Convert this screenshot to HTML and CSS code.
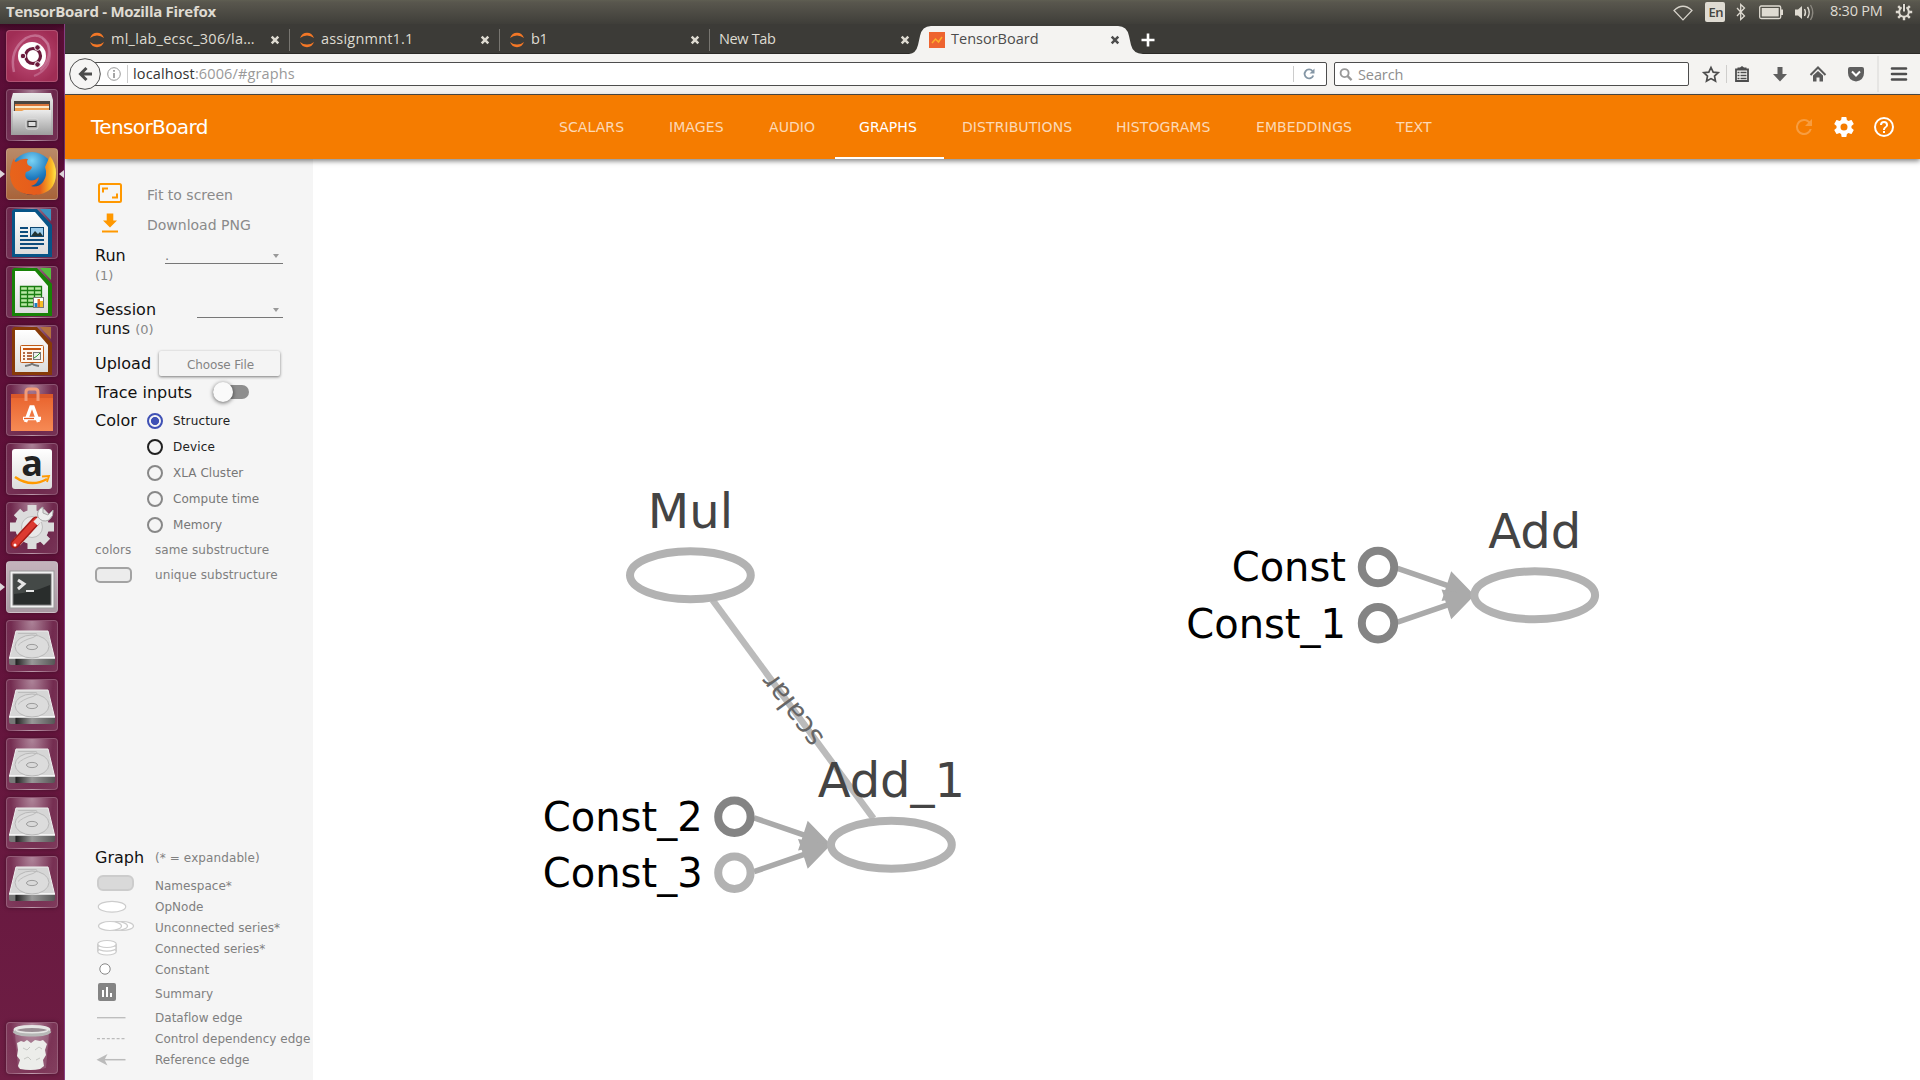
FILE: index.html
```html
<!DOCTYPE html>
<html lang="en">
<head>
<meta charset="utf-8">
<title>TensorBoard</title>
<link rel="stylesheet" href="styles.css">
</head>
<body>
<svg class="defs" width="0" height="0">
  <defs>
    <linearGradient id="silver" x1="0" y1="0" x2="0" y2="1"><stop offset="0" stop-color="#ececec"/><stop offset="1" stop-color="#9d9d9d"/></linearGradient>
    <linearGradient id="paper" x1="0" y1="0" x2="0" y2="1"><stop offset="0" stop-color="#fff"/><stop offset="1" stop-color="#dcdcdc"/></linearGradient>
    <linearGradient id="dark" x1="0" y1="0" x2="1" y2="0"><stop offset="0" stop-color="#777"/><stop offset=".13" stop-color="#777"/><stop offset=".15" stop-color="#222"/><stop offset=".5" stop-color="#999"/><stop offset="1" stop-color="#555"/></linearGradient>
    <linearGradient id="bag" x1="0" y1="0" x2="0" y2="1"><stop offset="0" stop-color="#e8622c"/><stop offset="1" stop-color="#f68a55"/></linearGradient>
    <radialGradient id="globe" cx=".5" cy=".2" r=".8"><stop offset="0" stop-color="#7ad3f5"/><stop offset=".5" stop-color="#1f7cc0"/><stop offset="1" stop-color="#10306c"/></radialGradient>
    <linearGradient id="fox" x1="0" y1="0" x2="1" y2="0"><stop offset="0" stop-color="#e8641b"/><stop offset=".65" stop-color="#e55b1c"/><stop offset=".9" stop-color="#fbb827"/><stop offset="1" stop-color="#ffe74a"/></linearGradient>
    <symbol id="drive" viewBox="0 0 52 52">
      <path d="M10 11h32l6.500 27H3.500z" fill="#d6d6d6" stroke="#efefef"/>
      <path d="M3 38h46v5q0 2-2 2H5q-2 0-2-2z" fill="url(#dark)"/>
      <path d="M3 38h46" stroke="#fafafa" stroke-width="1.400"/>
      <ellipse cx="26" cy="26.500" rx="17" ry="11.500" fill="#dcdcdc" stroke="#b8b8b8"/>
      <path d="M12 13.500h18q3 1-3 4-11 3-15 8" fill="none" stroke="#bdbdbd"/>
      <ellipse cx="26" cy="27" rx="5.500" ry="2.600" fill="#d9d9d9" stroke="#9c9c9c"/>
    </symbol>
    <symbol id="close" viewBox="0 0 10 10"><path d="M1.700 1.700l6.600 6.600M8.300 1.700l-6.600 6.600" stroke="currentColor" stroke-width="2.500"/></symbol>
    <symbol id="jupyter" viewBox="0 0 16 16"><path d="M1 6Q3 .8 8 .8T15 6Q12 3.400 8 3.400T1 6zM1 10q2 5.200 7 5.200t7-5.200q-3 2.600-7 2.600T1 10z" fill="#f37726"/></symbol>
  </defs>
</svg>

<header class="panel">
  <span class="panel-title">TensorBoard - Mozilla Firefox</span>
  <svg class="panel-icons" width="156" height="24" viewBox="1670 0 156 24">
    <path d="M1674 10.500q9-8.500 18 0l-9 9.300z" fill="none" stroke="#d8d4cb" stroke-width="1.200"/>
    <rect x="1705" y="2" width="20" height="20" rx="2" fill="#dfdbd2"/>
    <text class="lang" x="1708.500" y="17">En</text>
    <path d="M1737 8l7.500 8-3.800 3.500v-15l3.800 3.500-7.500 8" fill="none" stroke="#dfdbd2" stroke-width="1.300"/>
    <rect x="1759.700" y="6" width="21" height="12.500" rx="1.500" fill="none" stroke="#dfdbd2" stroke-width="1.300"/><rect x="1761.700" y="8" width="17" height="8.500" fill="#dfdbd2"/><rect x="1781" y="9.500" width="2" height="5.500" fill="#dfdbd2"/>
    <path d="M1795 9.500h3l4-3.500v13l-4-3.500h-3z" fill="#dfdbd2"/><path d="M1804.500 9q2 3.500 0 7M1807.500 7q3.500 5.500 0 11" fill="none" stroke="#dfdbd2" stroke-width="1.400"/><path d="M1810.500 5q4.500 7.500 0 15" fill="none" stroke="#8c8981" stroke-width="1.300"/>
  </svg>
  <span class="clock">8:30 PM</span>
  <svg class="session" width="18" height="18" viewBox="-9 -9 18 18"><circle r="4.800" fill="none" stroke="#dfdbd2" stroke-width="2"/><g stroke="#dfdbd2" stroke-width="2.400"><path d="M0 5v3.200M5 0h3.200M-5 0h-3.200M3.600 3.600l2.200 2.200M-3.600 3.600l-2.200 2.200M3.600-3.600l2.200-2.200M-3.600-3.600l-2.200-2.200"/></g><path d="M0-8v8" stroke="#45443f" stroke-width="4.500"/><path d="M0-8v7.500" stroke="#dfdbd2" stroke-width="2"/></svg>
</header>

<div class="desktop">
  <nav class="launcher">
    <div class="tile tile-dash"><svg viewBox="0 0 52 52"><path d="M8 42Q3 20 20 8q14-7 22 6 4 16-8 26" fill="none" stroke="#d390ae" stroke-width="2.500" opacity=".6"/><path d="M36 8q12 10 6 26-4 8-14 12" fill="none" stroke="#ca7b9c" stroke-width="2" opacity=".6"/><circle cx="26" cy="26" r="14" fill="#fff"/><circle cx="27" cy="26" r="7.500" fill="none" stroke="#6b1a3c" stroke-width="3.200"/><g fill="#6b1a3c" stroke="#fff" stroke-width="1"><circle cx="17" cy="26" r="2.800"/><circle cx="31.500" cy="17.500" r="2.800"/><circle cx="31.500" cy="34.500" r="2.800"/></g></svg></div>
    <div class="tile"><svg viewBox="0 0 52 52"><path d="M7 4h38l2 7v35H5V11z" fill="url(#silver)"/><path d="M8 12h36v12H8z" fill="#4a4540"/><path d="M9 15l34 0v6H9z" fill="#d9763a"/><path d="M9 17h34v2H9z" fill="#fbe9c8"/><path d="M9 19h34v3H9z" fill="#eea052"/><path d="M7 22h9l2-1h27v25H7z" fill="url(#silver)"/><rect x="20" y="30" width="12" height="10" rx="2" fill="#aaa" stroke="#dcdcdc"/><rect x="22" y="32.500" width="8" height="5" fill="#ddd" stroke="#333"/></svg></div>
    <div class="tile tile-firefox tile-running tile-focused"><svg viewBox="0 0 52 52"><circle cx="26" cy="25.500" r="21.500" fill="url(#globe)"/><path d="M8 10q0 3 2 4 6-4 12-3-2 3 0 6l4 2q-1 4-6 5-2 4 1 7 6 4 12-2-1 7-8 9 7 2 12-4 5-7 2-15l5-11q6 8 6 17 0 21-22 22Q5 46 4 27 4 18 8 10z" fill="url(#fox)"/></svg></div>
    <div class="tile"><svg viewBox="0 0 52 52"><path d="M8 2h23l15 16v32H6V4z" fill="#075487"/><path d="M34 2h11v12z" fill="#3b92bf"/><path d="M9 5h20l13 15v27H9z" fill="url(#paper)"/><path d="M14 21h8M14 25h8M14 29h8M14 33h24M14 37h24M14 41h18" stroke="#0d4c7c" stroke-width="2"/><rect x="24.500" y="20.500" width="13" height="9" fill="#9bcbea" stroke="#0e4670"/><path d="M25 29l4-5 3 3 2-2 3 4z" fill="#233"/></svg></div>
    <div class="tile"><svg viewBox="0 0 52 52"><path d="M8 2h23l15 16v32H6V4z" fill="#188207"/><path d="M34 2h11v12z" fill="#55bd3f"/><path d="M9 5h20l13 15v27H9z" fill="url(#paper)"/><path d="M14.500 20.500h21v20h-21z" fill="#b8e8a3"/><path d="M14.500 20.500h21v20h-21zM14 24.500h21M14 28.500h21M14 32.500h21M14 36.500h21M21.500 20v20M28.500 20v20" fill="none" stroke="#1b7d12" stroke-width="1.300"/><rect x="27.500" y="31.500" width="10" height="10" fill="#fff" stroke="#777"/><path d="M28.500 37h3v4h-3z" fill="#187fc4"/><path d="M31.500 33h2.500v8h-2.500z" fill="#e86d1e"/><path d="M34 35h3v6h-3z" fill="#f6bd28"/></svg></div>
    <div class="tile"><svg viewBox="0 0 52 52"><path d="M8 2h23l15 16v32H6V4z" fill="#873a08"/><path d="M34 2h11v12z" fill="#b4713f"/><path d="M9 5h20l13 15v27H9z" fill="url(#paper)"/><rect x="14.500" y="20.500" width="23" height="17" rx="1" fill="#fff7ee" stroke="#bf5b18"/><path d="M17 24h18" stroke="#c7540f" stroke-width="2"/><path d="M17 28h2M17 31h2M17 34h2M21 28h5M21 31h5M21 34h5" stroke="#9a3e0c" stroke-width="1.600"/><rect x="27.500" y="27.500" width="7" height="7" fill="#eee" stroke="#777"/><path d="M28 33l3-2 3-3" stroke="#2a9d2a" fill="none"/><path d="M19 41q7-1 7-3 0 2 7 3" stroke="#777" stroke-width="2" fill="none"/></svg></div>
    <div class="tile"><svg viewBox="0 0 52 52"><path d="M5 10h42v37H5z" fill="url(#bag)"/><path d="M5 10h42v4H5z" fill="#d9582a"/><path d="M20 17V8q0-3 3-3h6q3 0 3 3v9" fill="none" stroke="#f29b78" stroke-width="3"/><path d="M19.500 38l5.500-15h2l5.500 15" fill="none" stroke="#fff" stroke-width="3.500"/><path d="M17 34.500h18" stroke="#fff" stroke-width="3.500"/><path d="M18 34.500h10" stroke="#e85f25" stroke-width="1.300"/></svg></div>
    <div class="tile"><svg viewBox="0 0 52 52"><rect x="6" y="6" width="40" height="40" rx="3" fill="url(#paper)"/><text class="amazon" x="26" y="32.500" text-anchor="middle">a</text><path d="M9 34q16 11 32 2" fill="none" stroke="#ff9900" stroke-width="2.500"/><path d="M36 33.500l7-.5-2 6" fill="none" stroke="#ff9900" stroke-width="1.800"/></svg></div>
    <div class="tile"><svg viewBox="0 0 52 52"><g transform="translate(26 25)"><path d="M0-22v44M-22 0h44M-15-15l30 30M-15 15l30-30" stroke="#dcdcdc" stroke-width="9"/><circle r="17" fill="#dcdcdc"/><circle r="10.500" fill="#e8e8e8" stroke="#bdbdbd"/></g><path d="M9 42L30 19" stroke="#a51b17" stroke-width="9" stroke-linecap="round"/><path d="M9 42L30 19" stroke="#dc3a31" stroke-width="6" stroke-linecap="round"/><path d="M29.500 21.500l8-8" stroke="#e9e9e9" stroke-width="6"/><path d="M37 5q-7 3-5 10 4 6 11 3 5-4 4-10l-5 5-5-2z" fill="#eee" stroke="#a9a9a9"/><circle cx="9" cy="43" r="1.500" fill="#fff"/></svg></div>
    <div class="tile tile-terminal tile-running"><svg viewBox="0 0 52 52"><rect x="4" y="10" width="44" height="37" fill="#f1f1f1" stroke="#999"/><rect x="7" y="13" width="38" height="31" fill="#292d2c" stroke="#777"/><path d="M8 14h36v10Q25 32 8 33z" fill="#444947"/><path d="M12 19l6 4-6 5" fill="none" stroke="#e6e6e6" stroke-width="3"/><path d="M20 30h8" stroke="#e6e6e6" stroke-width="2"/></svg></div>
    <div class="tile"><svg><use href="#drive"/></svg></div>
    <div class="tile"><svg><use href="#drive"/></svg></div>
    <div class="tile"><svg><use href="#drive"/></svg></div>
    <div class="tile"><svg><use href="#drive"/></svg></div>
    <div class="tile"><svg><use href="#drive"/></svg></div>
    <div class="tile tile-trash"><svg viewBox="0 0 52 52"><path d="M9 12h34l-3 34q-14 4-28 0z" fill="#cdb7c2" opacity=".25"/><path d="M11 21l4-2 3 1 3-2 4 3 4-3 5 1 3-1 4 4-2 6 1 5-3 5 1 6-4 3q-9 2-20 0l-2-3 2-6-3-4 1-6z" fill="#ecedea"/><path d="M17 26l4 2 3-3M29 28l4-3 3 2M18 37l4-2 3 3M30 38l4-2" stroke="#c6c8c4" fill="none"/><ellipse cx="26" cy="8" rx="17" ry="3.500" fill="#998d93" stroke="#e6e6e4" stroke-width="3"/><path d="M8 9q2 4 18 4t18-4" fill="none" stroke="#b7b9b7" stroke-width="3"/></svg></div>
  </nav>

  <main class="browser">
    <div class="tabstrip">
      <div class="tab"><svg class="favicon"><use href="#jupyter"/></svg><span class="tab-label tab-label-path">ml_lab_ecsc_306/la…</span><svg class="tab-close"><use href="#close"/></svg></div>
      <div class="tab"><svg class="favicon"><use href="#jupyter"/></svg><span class="tab-label tab-label-wide">assignmnt1.1</span><svg class="tab-close"><use href="#close"/></svg></div>
      <div class="tab"><svg class="favicon"><use href="#jupyter"/></svg><span class="tab-label">b1</span><svg class="tab-close"><use href="#close"/></svg></div>
      <div class="tab tab-last"><span class="tab-label">New Tab</span><svg class="tab-close"><use href="#close"/></svg></div>
      <div class="tab tab-active">
        <svg class="tab-shape" width="234" height="28" viewBox="0 0 234 28"><path d="M0 28q7-.5 9-9l2-9Q13 0 22 0h187q9 0 11 10l2 9q2 8.500 12 9z" fill="#f4f3f1"/></svg>
        <svg class="favicon" viewBox="0 0 16 16"><path fill="#ee6430" d="M0 0h16v16H0z"/><path d="M3 11l3.500-4 3 3L13 5" fill="none" stroke="#fdb02c" stroke-width="1.500"/></svg><span class="tab-label tab-label-current">TensorBoard</span><svg class="tab-close"><use href="#close"/></svg>
      </div>
      <svg class="new-tab" viewBox="0 0 14 14"><path d="M7 .5v13M.5 7h13" stroke="#fff" stroke-width="2.600"/></svg>
    </div>

    <div class="toolbar">
      <div class="urlbar">
        <svg class="back" viewBox="0 0 32 32"><circle cx="16" cy="16" r="15.300" fill="#f6f5f4" stroke="#4d4d4d"/><path d="M23 16H12M17.500 10l-6 6 6 6" fill="none" stroke="#4c4c4c" stroke-width="3"/></svg>
        <svg class="info" viewBox="0 0 14 14"><circle cx="7" cy="7" r="6.300" fill="none" stroke="#999"/><path d="M7 6v5M7 3v1.800" stroke="#888" stroke-width="1.500"/></svg>
        <span class="url"><b>localhost</b>:6006/#graphs</span>
        <svg class="reload" viewBox="0 0 12 12"><path d="M9.500 3A4.500 4.500 0 1 0 10.300 7.500" fill="none" stroke="#8496a5" stroke-width="1.800"/><path d="M11.500 .5v5H6.500z" fill="#8496a5"/></svg>
      </div>
      <div class="search"><svg viewBox="0 0 15 15"><circle cx="6" cy="6" r="4.300" fill="none" stroke="#999" stroke-width="2"/><path d="M9 9l4.500 4.500" stroke="#999" stroke-width="2.400"/></svg><span>Search</span></div>
      <svg class="tools" width="220" height="40" viewBox="1696 54 220 40">
        <path d="M1711 67.500l2.200 4.600 5 .6-3.700 3.400 1 5-4.500-2.500-4.500 2.500 1-5-3.700-3.400 5-.6z" fill="none" stroke="#4d4d4d" stroke-width="1.700"/>
        <path d="M1726.500 65v18" stroke="#cfcecc"/><path d="M1878 56v36" stroke="#d8d7d5"/>
        <path d="M1736 69.500h12v11.500h-12z" fill="none" stroke="#4d4d4d" stroke-width="1.800"/><path d="M1737.500 69v-1.500h2.500l2-1.500 2 1.500h2.500V69z" fill="#4d4d4d"/><path d="M1737.500 72.500h2M1740.500 72.500h6M1737.500 75.500h2M1740.500 75.500h6M1737.500 78.500h2M1740.500 78.500h6" stroke="#4d4d4d" stroke-width="1.500"/>
        <path d="M1777.500 67h5v7h4.500l-7 7.500-7-7.500h4.500z" fill="#5f5f5f"/>
        <path d="M1810.500 75l7.500-7.500 7.500 7.500" fill="none" stroke="#5a5a5a" stroke-width="2"/><path d="M1813 75.500l5-4.500 5 4.500v6h-3.500v-4h-3v4h-3.500z" fill="#5a5a5a"/>
        <path d="M1850 67h12q2 0 2 2v4q0 7-8 8.500-8-1.500-8-8.500v-4q0-2 2-2z" fill="#5f5f5f"/><path d="M1852 71.500l4 4 4-4" fill="none" stroke="#fff" stroke-width="2"/>
        <path d="M1892 68.500h14M1892 74h14M1892 79.500h14" stroke="#4d4d4d" stroke-width="2.600" stroke-linecap="round"/>
      </svg>
    </div>

    <div class="appbar">
      <h1>TensorBoard</h1>
      <ul class="plugins">
        <li class="w110">SCALARS</li><li class="w100">IMAGES</li><li class="w90">AUDIO</li><li class="w103 selected">GRAPHS</li><li class="w154">DISTRIBUTIONS</li><li class="w140">HISTOGRAMS</li><li class="w140">EMBEDDINGS</li><li>TEXT</li>
      </ul>
      <div class="actions">
        <svg class="dim" viewBox="0 0 24 24"><path d="M17.650 6.350A7.960 7.960 0 0 0 12 4a8 8 0 1 0 7.730 10h-2.080A6 6 0 1 1 12 6c1.660 0 3.140.69 4.220 1.780L13 11h7V4z"/></svg>
        <svg viewBox="0 0 24 24"><path d="M19.430 12.980c.04-.32.07-.64.07-.98s-.03-.66-.07-.98l2.110-1.650c.19-.15.24-.42.12-.64l-2-3.460c-.12-.22-.39-.3-.61-.22l-2.490 1c-.52-.4-1.080-.73-1.690-.98l-.38-2.650A.488.488 0 0 0 14 2h-4c-.25 0-.46.18-.49.42l-.38 2.650c-.61.25-1.170.59-1.690.98l-2.490-1c-.23-.09-.49 0-.61.22l-2 3.460c-.13.22-.07.49.12.64l2.110 1.650c-.04.32-.07.65-.07.98s.03.66.07.98l-2.110 1.650c-.19.15-.24.42-.12.64l2 3.460c.12.22.39.3.61.22l2.490-1c.52.4 1.080.73 1.690.98l.38 2.650c.03.24.24.42.49.42h4c.25 0 .46-.18.49-.42l.38-2.650c.61-.25 1.170-.59 1.690-.98l2.490 1c.23.09.49 0 .61-.22l2-3.460c.12-.22.07-.49-.12-.64zM12 15.500a3.500 3.500 0 1 1 0-7 3.500 3.500 0 0 1 0 7z"/></svg>
        <svg viewBox="0 0 24 24"><path d="M11 18h2v-2h-2zm1-16a10 10 0 1 0 0 20 10 10 0 0 0 0-20zm0 18a8 8 0 1 1 0-16 8 8 0 0 1 0 16zm0-14a4 4 0 0 0-4 4h2a2 2 0 1 1 4 0c0 2-3 1.750-3 5h2c0-2.250 3-2.500 3-5a4 4 0 0 0-4-4z"/></svg>
      </div>
    </div>

    <div class="workspace">
      <aside class="sidebar">
        <div class="command"><svg width="24" height="20" viewBox="0 0 24 20"><rect x="1" y="1" width="22" height="18" rx="1.500" fill="none" stroke="#ff9800" stroke-width="2"/><path d="M5 9.500V5.500h5M19 10.500v4h-5" fill="none" stroke="#ff9800" stroke-width="2"/></svg><span>Fit to screen</span></div>
        <div class="command"><svg width="24" height="20" viewBox="0 0 24 20"><path d="M8.700.5h6.600v7H19l-7 7-7-7h3.700z" fill="#ff9800"/><path d="M4 18.500h16" stroke="#ff9800" stroke-width="2"/></svg><span>Download PNG</span></div>
        <div class="field field-run"><label>Run<br><small>(1)</small></label><div class="select"><span>.</span><i></i></div></div>
        <div class="field field-session"><label>Session<br>runs <small>(0)</small></label><div class="select"><span></span><i></i></div></div>
        <div class="upload"><label>Upload</label><button>Choose File</button></div>
        <div class="trace"><label>Trace inputs</label><span class="toggle"></span></div>
        <div class="color">
          <label>Color</label>
          <ul class="radios">
            <li class="enabled checked"><i></i>Structure</li>
            <li class="enabled"><i></i>Device</li>
            <li><i></i>XLA Cluster</li>
            <li><i></i>Compute time</li>
            <li><i></i>Memory</li>
          </ul>
        </div>
        <div class="key"><span>colors</span><span>same substructure</span></div>
        <div class="key"><span><i class="swatch"></i></span><span>unique substructure</span></div>

        <div class="legend">
          <div class="legend-head"><b>Graph</b><span>(* = expandable)</span></div>
          <div class="legend-row"><svg viewBox="0 0 60 21"><rect x="3" y="0" width="35" height="14" rx="5" fill="#d9d9d9" stroke="#ccc" stroke-width="2"/></svg>Namespace*</div>
          <div class="legend-row"><svg viewBox="0 0 60 21"><ellipse cx="17" cy="9.700" rx="13.700" ry="5.400" class="shape"/></svg>OpNode</div>
          <div class="legend-row"><svg viewBox="0 0 60 21"><ellipse cx="27" cy="8" rx="11.500" ry="4.500" class="shape"/><ellipse cx="21" cy="8" rx="11.500" ry="4.500" class="shape"/><ellipse cx="15" cy="8" rx="11.500" ry="4.500" class="shape"/></svg>Unconnected series*</div>
          <div class="legend-row"><svg viewBox="0 0 60 21"><ellipse cx="12" cy="12.500" rx="9.300" ry="3.500" class="shape"/><ellipse cx="12" cy="8.700" rx="9.300" ry="3.500" class="shape"/><ellipse cx="12" cy="5" rx="9.300" ry="3.500" class="shape"/><path d="M2.700 5v7.500M21.300 5v7.500" class="shape"/></svg>Connected series*</div>
          <div class="legend-row"><svg viewBox="0 0 60 21"><circle cx="10" cy="9" r="5.200" fill="#fff" stroke="#888"/></svg>Constant</div>
          <div class="legend-row legend-row-tall"><svg viewBox="0 0 60 27"><rect x="3" y="2" width="18" height="18" rx="2" fill="#848484"/><path d="M8 16V9M12 16V6M16 16v-4" stroke="#fff" stroke-width="2"/></svg>Summary</div>
          <div class="legend-row"><svg viewBox="0 0 60 21"><path d="M2 9.700h28.500" stroke="#bbb" stroke-width="1.300"/></svg>Dataflow edge</div>
          <div class="legend-row"><svg viewBox="0 0 60 21"><path d="M2 9.700h28.500" stroke="#bbb" stroke-width="1.300" stroke-dasharray="3 1.900"/></svg>Control dependency edge</div>
          <div class="legend-row"><svg viewBox="0 0 60 21"><path d="M9 9.700h21.500" stroke="#bbb" stroke-width="1.500"/><path d="M1.500 9.700L12.500 4 9.500 9.700l3 5.700z" fill="#bbb"/></svg>Reference edge</div>
        </div>
      </aside>

      <svg class="graph" width="1607" height="921" viewBox="313 159 1607 921">
        <path d="M712.500 600L873.500 818.500" stroke="#bbb" stroke-width="6.500"/>
        <text class="edge-label" text-anchor="middle" transform="translate(793.500 709) rotate(-126.400)" y="7.500">scalar</text>
        <g class="inputs">
          <path d="M754 817.800L805 835.300M754 871.700L805 854.200"/>
          <path class="head" d="M807.700 820.700L831 844.700 798 850.500 800 844.700z"/>
          <path class="head" d="M807.700 868.700L831 844.700 798 839 800 844.700z"/>
          <path d="M1397.500 568.300L1448.500 585.800M1397.500 622.200L1448.500 604.700"/>
          <path class="head" d="M1451.200 571.300L1474.500 595.300 1441.500 601 1443.500 595.300z"/>
          <path class="head" d="M1451.200 619.300L1474.500 595.300 1441.500 589.500 1443.500 595.300z"/>
        </g>
        <g class="ops"><ellipse cx="690.400" cy="575.200" rx="60.400" ry="24"/><ellipse cx="891.400" cy="844.700" rx="60.400" ry="24"/><ellipse cx="1534.700" cy="595.300" rx="60.400" ry="24"/></g>
        <g class="consts"><circle cx="734.400" cy="816.700" r="16.200"/><circle class="light" cx="734.400" cy="872.700" r="16.200"/><circle cx="1378" cy="567" r="16.200"/><circle cx="1378" cy="623.300" r="16.200"/></g>
        <g class="op-names"><text x="690.400" y="527.700">Mul</text><text x="891.400" y="796.700">Add_1</text><text x="1534.700" y="548">Add</text></g>
        <g class="const-names"><text x="702.600" y="830.700">Const_2</text><text x="702.600" y="886.700">Const_3</text><text x="1346" y="580.700">Const</text><text x="1346" y="637.500">Const_1</text></g>
      </svg>
    </div>
  </main>
</div>
</body>
</html>
```
FILE: styles.css
```css
* { box-sizing: border-box; }
body { margin: 0; width: 1920px; height: 1080px; overflow: hidden; display: flex; flex-direction: column; background: #fff; font-family: "DejaVu Sans", sans-serif; }
.defs { position: absolute; }
ul { list-style: none; margin: 0; padding: 0; }
svg { display: block; flex: none; }

/* desktop panel */
.panel { height: 24px; flex: none; display: flex; align-items: center; background: linear-gradient(#5f5e52 0, #59574e 2px, #3f3e39 100%); color: #dfdbd2; font-family: "Open Sans", "Noto Sans", sans-serif; }
.panel-title { margin-left: 6px; font-size: 15px; font-weight: 700; letter-spacing: -.28px; white-space: nowrap; width: 1664px; line-height: 20px; padding-bottom: 2px; }
.panel-icons { width: 156px; }
.lang { font: 600 13px "Open Sans", sans-serif; fill: #45443f; letter-spacing: -.5px; }
.clock { width: 69px; padding: 0 0 2px 4px; font-size: 14.500px; letter-spacing: -.25px; line-height: 20px; white-space: nowrap; }
.desktop { flex: 1; min-height: 0; display: flex; }

/* launcher */
.launcher { width: 65px; flex: none; padding: 6px 0 6px 6px; display: flex; flex-direction: column; gap: 7px; background: linear-gradient(#3c0823 0, #5b0e37 8px, #5f1039 45%, #6e1e44 100%); border-right: 1px solid #883f83; }
.tile { position: relative; width: 52px; height: 52px; flex: none; border-radius: 4px; border: 1px solid rgba(255,255,255,.18); background: radial-gradient(ellipse at 50% 0, rgba(255,255,255,.48), rgba(255,255,255,.1) 60%, rgba(255,255,255,.15)); box-shadow: 0 0 4px rgba(0,0,0,.35); }
.tile svg { width: 52px; height: 52px; margin: -1px; overflow: visible; }
.tile-dash { background: radial-gradient(circle, #c2527b, #a02d55 80%); }
.tile-firefox { background: linear-gradient(#b98a68, #a8633a); }
.tile-terminal { background: linear-gradient(#c4b4bc, #a898a2); }
.tile-trash { margin-top: auto; }
.tile-running::before { content: ""; position: absolute; left: -7px; top: 21px; border: 4px solid transparent; border-left: 5px solid #ddd5da; border-right: 0; }
.tile-focused::after { content: ""; position: absolute; right: -7px; top: 21px; border: 4px solid transparent; border-right: 5px solid #ddd5da; border-left: 0; }
.amazon { font: 700 36px "Open Sans", sans-serif; fill: #222; }

/* browser chrome */
.browser { flex: 1; min-width: 0; display: flex; flex-direction: column; }
.tabstrip { height: 30px; flex: none; display: flex; padding-left: 15px; background: #3c3b37; border-bottom: 1px solid #2b2a27; font: 14.500px "Open Sans", "Noto Sans", sans-serif; color: #dfdbd2; }
.tab { position: relative; width: 210px; height: 29px; display: flex; align-items: center; padding: 3px 10px 0 9px; }
.tab:not(.tab-active):not(.tab-last)::after { content: ""; position: absolute; right: 0; top: 5px; height: 22px; width: 1px; background: #777570; }
.favicon { width: 16px; height: 16px; margin-right: 6px; position: relative; }
.tab-label { flex: 1; white-space: nowrap; letter-spacing: -.35px; line-height: 20px; padding-bottom: 2px; position: relative; }
.tab-label-path { letter-spacing: .26px; }
.tab-label-wide { letter-spacing: .2px; }
.tab-label-current { letter-spacing: 0; }
.tab-close { width: 10px; height: 10px; position: relative; }
.tab-active { color: #4c4c4c; }
.tab-shape { position: absolute; left: -11px; top: 2px; }
.new-tab { width: 14px; height: 14px; margin: 9px 0 0 11px; }
.toolbar { height: 41px; flex: none; display: flex; align-items: center; padding-left: 20px; background: #f4f3f1; border-bottom: 1px solid #4d4c49; font: 14.500px "Open Sans", "Noto Sans", sans-serif; }
.urlbar { width: 1242px; height: 24px; margin-right: 7px; display: flex; align-items: center; background: #fff; border: 1px solid #4d4d4d; border-radius: 2px; }
.back { width: 32px; height: 32px; margin-left: -17px; }
.info { width: 14px; height: 14px; margin: 0 6px; }
.url { flex: 1; border-left: 1px solid #ccc; padding-left: 5px; line-height: 18px; color: #999; letter-spacing: .13px; }
.url b { color: #333; font-weight: 400; }
.reload { width: 33px; height: 16px; border-left: 1px solid #ccc; padding: 2px 2px 2px 0; }
.search { width: 355px; height: 24px; display: flex; align-items: center; gap: 5px; padding-left: 4px; background: #fff; border: 1px solid #4d4d4d; border-radius: 2px; color: #8e8e8e; letter-spacing: -.1px; }
.search svg { width: 14px; height: 15px; }
.tools { margin-left: 7px; }

/* application bar */
.appbar { position: relative; height: 64px; flex: none; display: flex; align-items: center; background: #f57c00; color: #fff; box-shadow: 0 2px 5px rgba(0,0,0,.5); }
.appbar h1 { margin: 0; padding-left: 26px; width: 470px; font-size: 20px; font-weight: 400; letter-spacing: -.6px; }
.plugins { flex: 1; display: flex; height: 64px; line-height: 64px; font-size: 14px; letter-spacing: .08px; color: rgba(255,255,255,.72); }
.plugins li { padding-left: 24px; position: relative; }
.w90 { width: 90px; }
.w100 { width: 100px; }
.w103 { width: 103px; }
.w110 { width: 110px; }
.w140 { width: 140px; }
.w154 { width: 154px; }
.plugins .selected { color: #fff; }
.selected::after { content: ""; position: absolute; left: 0; bottom: 0; width: 109px; height: 2px; background: #fff; }
.actions { display: flex; gap: 16px; padding-right: 24px; }
.actions svg { width: 24px; height: 24px; fill: #fff; }
.actions .dim { opacity: .25; }

/* sidebar */
.workspace { flex: 1; min-height: 0; display: flex; }
.sidebar { width: 248px; flex: none; padding: 21px 0 9px 30px; background: #f5f5f5; display: flex; flex-direction: column; font-size: 16px; color: #111; }
.command { height: 30px; display: flex; align-items: center; font-size: 14px; color: #8a8a8a; }
.command svg { margin: -4px 25px 0 3px; }
small { font-size: 13px; color: #888; }
.field { display: flex; }
.field-run { height: 60px; padding-top: 6px; line-height: 19px; }
.field-run label { width: 70px; }
.field-session { height: 50px; line-height: 19px; }
.field-session label { width: 102px; }
.select { display: flex; justify-content: space-between; flex: none; border-bottom: 1px solid #777; color: #777; font-size: 13px; }
.field-run .select { width: 118px; height: 18px; }
.field-session .select { width: 86px; height: 18px; }
.select i { margin: 8px 4px 0 0; width: 6px; height: 3px; border: 3px solid transparent; border-top: 4px solid #999; border-bottom: 0; }
.upload { height: 26px; display: flex; align-items: center; }
.upload label { width: 64px; }
.upload button { width: 121px; height: 25px; padding: 3px 0 0 2px; border: 0; border-radius: 2px; background: #f4f4f4; box-shadow: 0 1px 3px rgba(0,0,0,.5); font: 12px "DejaVu Sans", sans-serif; letter-spacing: -.1px; color: #848484; }
.trace { height: 32px; display: flex; align-items: center; }
.trace label { width: 118px; }
.toggle { position: relative; width: 36px; height: 14px; border-radius: 7px; background: #8e8e8e; }
.toggle::before { content: ""; position: absolute; left: 0; top: -3px; width: 20px; height: 20px; border-radius: 50%; background: #fafafa; box-shadow: 0 1px 4px rgba(0,0,0,.6); }
.color { display: flex; height: 130px; }
.color label { width: 52px; line-height: 26px; }
.radios { font-size: 12px; line-height: 26px; color: #777; letter-spacing: .05px; }
.radios li { display: flex; align-items: center; gap: 10px; height: 26px; }
.radios i { width: 16px; height: 16px; border: 2px solid #888; border-radius: 50%; }
.radios .enabled { color: #222; letter-spacing: .15px; }
.radios .enabled i { border-color: #212121; }
.radios .checked i { border-color: #3f51b5; background: radial-gradient(circle, #3f51b5 3.700px, transparent 4.400px); }
.key { height: 24px; display: flex; align-items: center; font-size: 12px; color: #808080; letter-spacing: .1px; }
.key + .key { height: 26px; }
.key span:first-child { width: 60px; }
.swatch { display: block; width: 37px; height: 16px; border: 2px solid #a3a3a3; border-radius: 5px; background: #ececec; }
.legend { margin-top: auto; font-size: 12px; color: #808080; letter-spacing: .02px; }
.legend-head { display: flex; height: 28px; line-height: 20px; letter-spacing: .1px; }
.legend-head b { width: 60px; font-size: 16px; font-weight: 400; color: #111; letter-spacing: 0; }
.legend-row { display: flex; height: 21px; line-height: 21px; white-space: nowrap; }
.legend-row-tall { height: 27px; line-height: 27px; }
.legend-row svg { width: 60px; height: 100%; overflow: visible; }
.shape { fill: #fff; stroke: #ccc; stroke-width: 1.200; }
path.shape { fill: none; }

/* graph canvas */
.graph { font-family: "DejaVu Sans", sans-serif; }
.ops, .consts { fill: #fff; stroke: #b2b2b2; stroke-width: 8; }
.consts { stroke: #848484; }
.consts .light { stroke: #b2b2b2; }
.inputs { stroke: #aaa; stroke-width: 5.500; }
.inputs .head { stroke: none; fill: #aaa; }
.op-names { font-size: 48px; fill: #444; text-anchor: middle; }
.const-names { font-size: 40px; fill: #000; text-anchor: end; }
.edge-label { font-size: 28px; fill: #666; }
```
